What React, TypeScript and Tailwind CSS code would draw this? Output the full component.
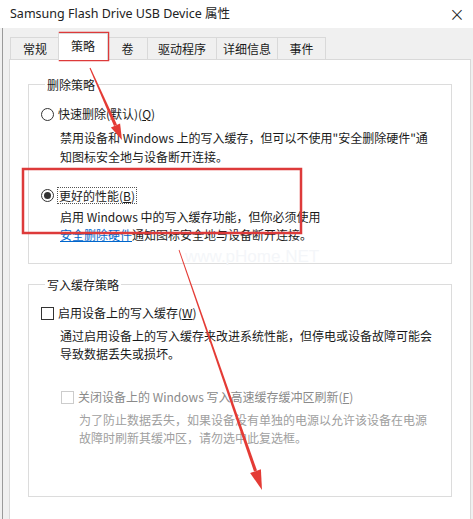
import React from 'react';

const tabs = [
  { label: '常规', w: 'w-[49px]' },
  { label: '策略', w: 'w-[50px]', active: true },
  { label: '卷', w: 'w-[40px]' },
  { label: '驱动程序', w: 'w-[69px]' },
  { label: '详细信息', w: 'w-[61px]' },
  { label: '事件', w: 'w-[49px]' },
];

function Radio({ checked }: { checked?: boolean }) {
  return (
    <span className="flex h-[13px] w-[13px] shrink-0 items-center justify-center rounded-full border border-[#333] bg-white">
      {checked && <span className="h-[7px] w-[7px] rounded-full bg-[#333]" />}
    </span>
  );
}

function Check({ disabled }: { disabled?: boolean }) {
  return (
    <span
      className={
        disabled
          ? 'h-[13px] w-[13px] shrink-0 border border-[#cccccc] bg-white'
          : 'h-[13px] w-[13px] shrink-0 border border-[#333] bg-white'
      }
    />
  );
}

function Overlay() {
  // red annotation marks drawn over the dialog
  return (
    <svg className="pointer-events-none absolute left-0 top-0" width="473" height="519" viewBox="0 0 473 519">
      <rect x="60" y="33" width="48" height="27" fill="none" stroke="#dd3a3a" strokeWidth="2.5" />
      <rect x="23" y="169" width="278" height="64" fill="none" stroke="#dd3a3a" strokeWidth="2.5" />
      <polygon points="89.5,68.2 90.5,67.8 117,124.8 114,126" fill="#e43b35" />
      <polygon points="122,140 120.1,123.4 110.9,127.4" fill="#e43b35" />
      <polygon points="178.6,250.2 179.4,249.8 257,470.5 254,471.6" fill="#e43b35" />
      <polygon points="262,490 260.9,469.2 250.1,473" fill="#e43b35" />
    </svg>
  );
}

export default function App() {
  return (
    <div className="relative h-[519px] w-[473px] overflow-hidden bg-[#f0f0f0] font-['Noto_Sans_CJK_SC',sans-serif] text-[12px] text-[#1a1a1a]">
      <div className="grid h-[28px] grid-cols-[1fr_24px] items-center bg-white pl-[10px]">
        <span className="font-['Noto_Sans','Noto_Sans_CJK_SC',sans-serif] text-[12.5px] text-[#222]">
          Samsung Flash Drive USB Device 属性
        </span>
        <span className="font-['DejaVu_Sans',sans-serif] text-[19px] font-light leading-[20px] text-[#222]">×</span>
      </div>

      <div className="ml-[2px] h-[491px] border-l border-[#9a9a9a] pl-[6px]">
        <div className="flex h-[31px] items-end pl-[1px]">
          {tabs.map((t) =>
            t.active ? (
              <div
                key={t.label}
                className={`${t.w} -mx-[1px] -mb-[1px] z-10 flex h-[27px] items-center justify-center border border-b-0 border-[#d9d9d9] bg-white pb-[2px]`}
              >
                {t.label}
              </div>
            ) : (
              <div
                key={t.label}
                className={`${t.w} flex h-[22px] items-center justify-center border border-b-0 border-r-0 border-[#d9d9d9] last:border-r`}
              >
                {t.label}
              </div>
            )
          )}
        </div>

        <div className="h-[470px] w-[462px] border border-[#d9d9d9] bg-white px-[18px] pt-[16px]">
          <fieldset className="h-[188px] border border-[#dcdcdc] pl-[12px] pr-[10px]">
            <legend className="ml-[4px] px-[2px] leading-[17px]">删除策略</legend>
            <div className="mt-[12px] flex h-[18px] items-center gap-[4px]">
              <Radio />
              <span>
                快速删除(默认)(<span className="underline">Q</span>)
              </span>
            </div>
            <div className="mt-[5px] pl-[19px] leading-[19px]">
              禁用设备和 Windows 上的写入缓存，但可以不使用"安全删除硬件"通
              <br />
              知图标安全地与设备断开连接。
            </div>
            <div className="mt-[20px] flex h-[18px] items-center gap-[3px]">
              <Radio checked />
              <span className="border border-dotted border-[#555] px-[1px] leading-[15px]">
                更好的性能(<span className="underline">B</span>)
              </span>
            </div>
            <div className="mt-[4px] pl-[19px] leading-[18px]">
              启用 Windows 中的写入缓存功能，但你必须使用
              <br />
              <span className="text-[#0066cc] underline">安全删除硬件</span>通知图标安全地与设备断开连接。
            </div>
            <div className="mt-[3px] pl-[144px] font-['Liberation_Sans',sans-serif] text-[17px] leading-[20px] text-[#f4f6f9]">
              www.pHome.NET
            </div>
          </fieldset>

          <fieldset className="mt-[12px] h-[221px] border border-[#dcdcdc] pl-[12px] pr-[10px]">
            <legend className="ml-[4px] px-[2px] leading-[17px]">写入缓存策略</legend>
            <div className="mt-[11px] flex h-[18px] items-center gap-[4px]">
              <Check />
              <span>
                启用设备上的写入缓存(<span className="underline">W</span>)
              </span>
            </div>
            <div className="mt-[5px] pl-[19px] leading-[18px]">
              通过启用设备上的写入缓存来改进系统性能，但停电或设备故障可能会
              <br />
              导致数据丢失或损坏。
            </div>
            <div className="mt-[25px] flex h-[18px] items-center gap-[4px] pl-[20px] text-[#8a8a8a]">
              <Check disabled />
              <span>
                关闭设备上的 Windows 写入高速缓存缓冲区刷新(<span className="underline">F</span>)
              </span>
            </div>
            <div className="mt-[5px] pl-[38px] leading-[18px] text-[#a0a0a0]">
              为了防止数据丢失，如果设备没有单独的电源以允许该设备在电源
              <br />
              故障时刷新其缓冲区，请勿选中此复选框。
            </div>
          </fieldset>
        </div>
      </div>

      <Overlay />
    </div>
  );
}
